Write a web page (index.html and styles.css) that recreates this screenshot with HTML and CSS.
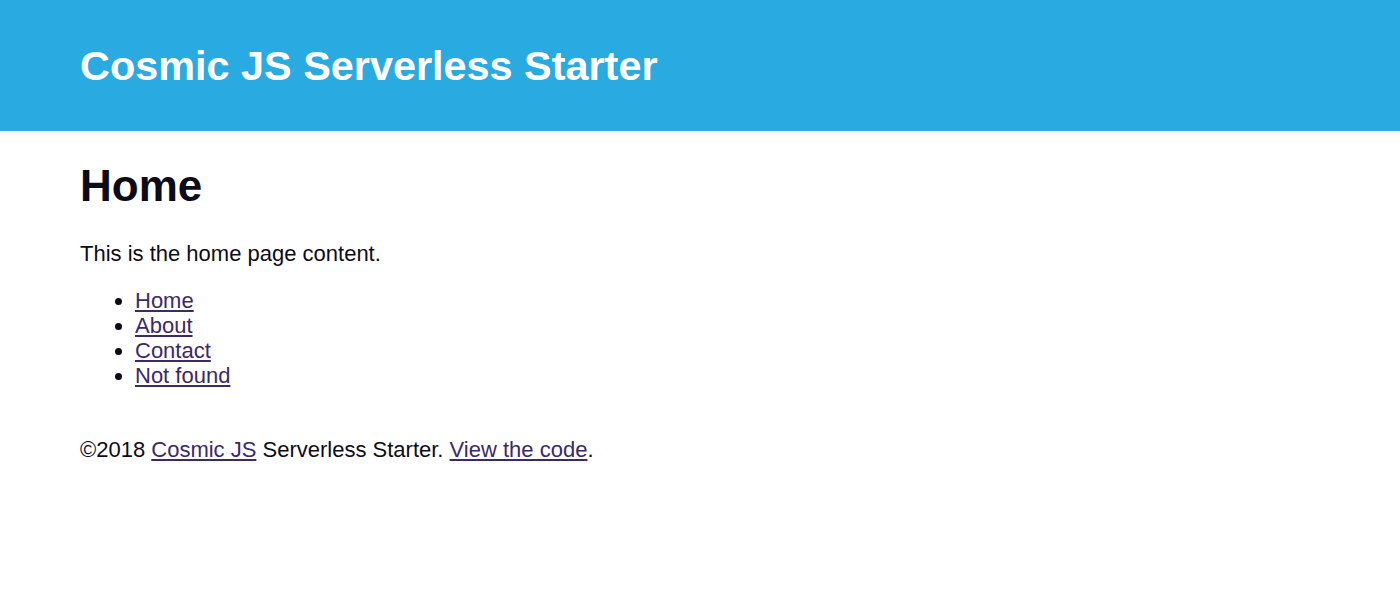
FILE: index.html
```html
<!DOCTYPE html>
<html>
<head>
<meta charset="utf-8">
<title>Cosmic JS Serverless Starter</title>
<link rel="stylesheet" href="styles.css">
</head>
<body>
<header class="site-header">
  <div class="site-title">Cosmic JS Serverless Starter</div>
</header>
<main class="content">
  <h1 class="page-title">Home</h1>
  <p class="intro">This is the home page content.</p>
  <ul class="nav-list">
    <li><a href="#">Home</a></li>
    <li><a href="#">About</a></li>
    <li><a href="#">Contact</a></li>
    <li><a href="#">Not found</a></li>
  </ul>
  <footer class="site-footer">©2018 <a href="#">Cosmic JS</a> Serverless Starter. <a href="#">View the code</a>.</footer>
</main>
</body>
</html>
```
FILE: styles.css
```css
html, body {
  margin: 0;
  padding: 0;
  background: #ffffff;
}
body {
  font-family: "Liberation Sans", Arial, Helvetica, sans-serif;
  color: #0d0b17;
  font-size: 22px;
  line-height: 25px;
}
.site-header {
  background: #29abe2;
  height: 131px;
  display: flex;
  align-items: center;
  padding: 0 80px;
  box-sizing: border-box;
}
.site-title {
  color: #ffffff;
  font-weight: bold;
  font-size: 41.4px;
  line-height: 48px;
  margin-top: 1px;
}
.content {
  padding: 0 80px;
}
.page-title {
  margin: 0;
  padding-top: 30px;
  font-size: 44px;
  line-height: 50px;
  font-weight: bold;
}
.intro {
  margin: 30px 0 0 0;
}
.nav-list {
  margin: 22px 0 0 0;
  padding-left: 55px;
}
a {
  color: #3b2a69;
  text-decoration: underline;
}
.site-footer {
  margin-top: 49px;
}
```
